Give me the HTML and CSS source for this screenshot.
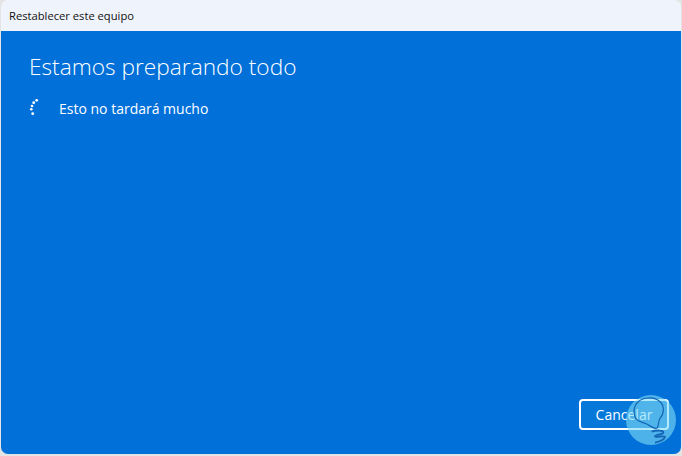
FILE: index.html
```html
<!DOCTYPE html>
<html>
<head>
    <title>Restablecer este equipo</title>
    <link rel="stylesheet" href="styles.css">
</head>
<body>
    <div class="window">
        <div class="titlebar">Restablecer este equipo</div>
        <div class="content">
            <h1 class="heading">Estamos preparando todo</h1>
            <div class="status">
                <svg class="spinner" width="12" height="20" viewBox="0 0 12 20">
                    <circle cx="7.7" cy="3.3" r="1.4"/>
                    <circle cx="4.7" cy="5.7" r="1.4"/>
                    <circle cx="3" cy="9" r="1.3"/>
                    <circle cx="2.3" cy="12.3" r="1.3"/>
                    <circle cx="3.7" cy="16.7" r="1.4"/>
                </svg>
                <span>Esto no tardará mucho</span>
            </div>
            <div class="footer">
                <button class="button">Cancelar</button>
            </div>
        </div>
    </div>
    <svg class="watermark" width="50" height="50" viewBox="0 0 50 50">
        <circle cx="25" cy="25" r="25" fill="#80dcf5" fill-opacity="0.6"/>
        <path d="M10.7 24.3C7 20 7 11 12.3 6.7C17 2.5 28 1 34 6.7C39 11 38 19 34 23.3C32 26 33 31 31 33C28 35 24 30 19 28.3C16 27 13 27 10.7 24.3Z" fill="none" stroke="#1565b5" stroke-width="1.2"/>
        <path d="M25.7 36.7C30 35 38 35 37.3 37.7C36 40 29 39.5 29 41.5C30 43 38 40 39 42C38 45 32 47 29 47.7" fill="none" stroke="#1565b5" stroke-width="1.8"/>
    </svg>
</body>
</html>
```

FILE: styles.css
```css
html, body {
    height: 100%;
}
body {
    margin: 0;
    background-color: #e4e4e4;
    font-family: "Open Sans", "Noto Sans", sans-serif;
    overflow: hidden;
}
.window {
    width: 680px;
    height: 454px;
    margin-left: 1px;
    display: flex;
    flex-direction: column;
    border-radius: 7px;
    overflow: hidden;
}
.titlebar {
    height: 31px;
    padding-left: 8px;
    background-color: #eff3fb;
    color: #111;
    font-size: 11.2px;
    line-height: 31px;
}
.content {
    flex: 1;
    display: flex;
    flex-direction: column;
    padding: 21px 12px 24px 28px;
    background-color: #0170d9;
    color: #fff;
}
.heading {
    margin: 0;
    font-size: 22.7px;
    font-weight: 300;
    line-height: 30px;
}
.status {
    display: flex;
    align-items: center;
    gap: 18px;
    margin-top: 17px;
    font-size: 14px;
}
.spinner {
    fill: #fff;
    margin-top: -4px;
}
.footer {
    margin-top: auto;
    display: flex;
    justify-content: flex-end;
}
.button {
    width: 90px;
    height: 31px;
    border: 2px solid #fff;
    border-radius: 4px;
    background-color: #0678d9;
    color: #fff;
    font-family: inherit;
    font-size: 14px;
}
.watermark {
    position: absolute;
    left: 626px;
    top: 395px;
}
```
